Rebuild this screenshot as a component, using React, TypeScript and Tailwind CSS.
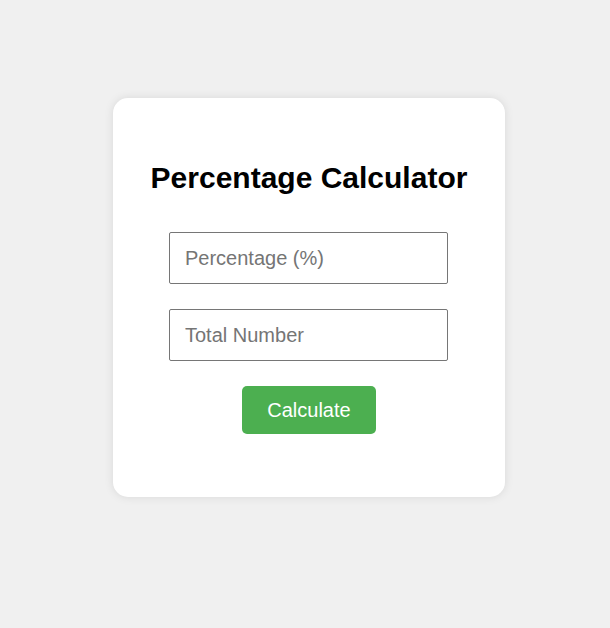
export default function App() {
  return (
    <div className="min-h-[628px] bg-[#f0f0f0] pl-2 pt-[98px] flex justify-center items-start font-['Liberation_Sans',Arial,sans-serif]">
      <div className="w-[392px] h-[399px] bg-white rounded-[15px] shadow-[0_0_10px_rgba(0,0,0,0.1)] pt-[62px] flex flex-col items-center">
        <h2 className="text-[30px] leading-[35px] font-bold text-black">
          Percentage Calculator
        </h2>
        <input
          type="number"
          placeholder="Percentage (%)"
          className="mt-[37px] mr-[1px] w-[279px] h-[52px] px-[15px] text-[20px] border border-[#767676] rounded-[2px] outline-none placeholder:text-[#757575]"
        />
        <input
          type="number"
          placeholder="Total Number"
          className="mt-[25px] mr-[1px] w-[279px] h-[52px] px-[15px] text-[20px] border border-[#767676] rounded-[2px] outline-none placeholder:text-[#757575]"
        />
        <button className="mt-[25px] w-[134px] h-[48px] bg-[#4caf50] text-white text-[20px] rounded-[5px]">
          Calculate
        </button>
      </div>
    </div>
  );
}
